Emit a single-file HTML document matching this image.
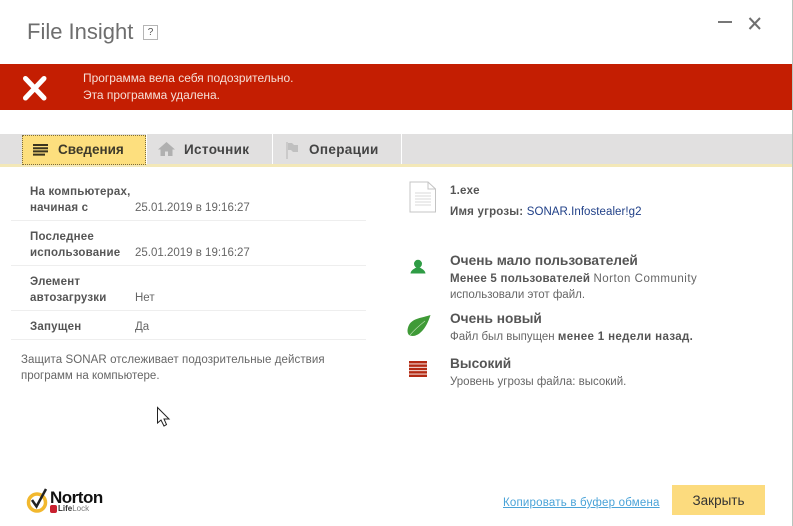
<!DOCTYPE html>
<html><head><meta charset="utf-8">
<style>
html,body{margin:0;padding:0;background:#fff}
#p{position:relative;width:793px;height:526px;overflow:hidden;background:#fff;font-family:"Liberation Sans",sans-serif;color:#666;font-size:11.5px}
#p div,#p a,#p svg{position:absolute}
.t{white-space:nowrap;line-height:16px}
.b{font-weight:bold;color:#555;letter-spacing:.2px}
.h{font-weight:bold;color:#555;font-size:13.7px}
.ln{left:11px;width:355px;height:1px;background:#eeeeee}
</style></head><body>
<div id="p">
<div style="left:792px;top:0;width:1px;height:526px;background:#b9c4bd"></div>
<div class="t" style="left:27px;top:18px;font-size:22px;line-height:28px;color:#6e6e6e">File Insight</div>
<div class="t" style="left:143px;top:25px;width:13px;height:13px;border:1px solid #b5b5b5;font-size:10px;line-height:13px;text-align:center;color:#555">?</div>
<svg style="left:716px;top:14px" width="50" height="20" viewBox="0 0 50 20"><path d="M2 8H16" stroke="#777" stroke-width="2"/><path d="M33.500 4L44 15M44 4L33.500 15" stroke="#707070" stroke-width="2" fill="none"/></svg>

<div style="left:0;top:64px;width:792px;height:46px;background:#c41e02"></div>
<svg style="left:22px;top:75px" width="26" height="26" viewBox="0 0 26 26"><path d="M3.500 3.500L22 23M22 3.500L3.500 23" stroke="#fff" stroke-width="5" stroke-linecap="round"/></svg>
<div class="t" style="left:83px;top:70px;color:#f6e0d8;font-size:11.95px">Программа вела себя подозрительно.</div>
<div class="t" style="left:83px;top:87px;color:#f6e0d8;font-size:11.95px">Эта программа удалена.</div>

<div style="left:0;top:134px;width:792px;height:30px;background:#e1e0e0"></div>
<div style="left:0;top:164px;width:792px;height:3px;background:#f3e8b8"></div>
<div style="left:22px;top:135px;width:122px;height:28px;background:#fddf7e;border:1px dotted #7d6d3c"></div>
<div style="left:146px;top:134px;width:1px;height:30px;background:#fff"></div>
<div style="left:272px;top:134px;width:1px;height:30px;background:#fff"></div>
<div style="left:401px;top:134px;width:1px;height:30px;background:#fff"></div>
<svg style="left:33px;top:144px" width="16" height="12" viewBox="0 0 16 12"><path d="M0 1H15M0 4.200H15M0 7.400H15M0 10.600H12" stroke="#3b3520" stroke-width="2"/></svg>
<div class="t" style="left:58px;top:142px;font-size:13.500px;font-weight:bold;color:#3e3a2a">Сведения</div>
<svg style="left:158px;top:142px" width="17" height="14" viewBox="0 0 17 14"><path d="M8.500 0L17 7.500H14.500V14H10V9.500H7V14H2.500V7.500H0Z" fill="#b0b0b0"/></svg>
<div class="t" style="left:184px;top:142px;font-size:13.500px;font-weight:bold;color:#444;letter-spacing:.35px">Источник</div>
<svg style="left:286px;top:142px" width="14" height="17" viewBox="0 0 14 17"><path d="M1 0V17" stroke="#b5b5b5" stroke-width="1"/><path d="M2 1H6L8 3H12V10H7L5 8H2Z" fill="#c0c0c0"/></svg>
<div class="t" style="left:309px;top:142px;font-size:13.500px;font-weight:bold;color:#444;letter-spacing:.35px">Операции</div>

<div class="t b" style="left:30px;top:184px">На компьютерах,</div>
<div class="t b" style="left:30px;top:200px">начиная с</div>
<div class="t" style="left:135px;top:200px">25.01.2019 в 19:16:27</div>
<div class="ln" style="top:220px"></div>
<div class="t b" style="left:30px;top:229px">Последнее</div>
<div class="t b" style="left:30px;top:245px">использование</div>
<div class="t" style="left:135px;top:245px">25.01.2019 в 19:16:27</div>
<div class="ln" style="top:265px"></div>
<div class="t b" style="left:30px;top:274px">Элемент</div>
<div class="t b" style="left:30px;top:290px">автозагрузки</div>
<div class="t" style="left:135px;top:290px">Нет</div>
<div class="ln" style="top:310px"></div>
<div class="t b" style="left:30px;top:319px">Запущен</div>
<div class="t" style="left:135px;top:319px">Да</div>
<div class="ln" style="top:339px"></div>
<div class="t" style="left:21px;top:352px;letter-spacing:.08px">Защита SONAR отслеживает подозрительные действия</div>
<div class="t" style="left:21px;top:368px">программ на компьютере.</div>

<svg style="left:409px;top:181px" width="28" height="32" viewBox="0 0 28 32"><path d="M1 1H19L26.500 8V31H1Z" fill="#fff" stroke="#c4c4c4"/><path d="M19 1V8H26.500" fill="none" stroke="#c4c4c4"/><path d="M6 12H22M6 15H22M6 18H22M6 21H22M6 24H22" stroke="#d8d8d8"/></svg>
<div class="t b" style="left:450px;top:183px">1.exe</div>
<div class="t b" style="left:450px;top:204px">Имя угрозы: <span style="font-weight:normal;color:#1f3f87;letter-spacing:.05px">SONAR.Infostealer!g2</span></div>

<svg style="left:410px;top:259px" width="16" height="15" viewBox="0 0 16 15"><circle cx="8" cy="4.800" r="4" fill="#2f9c45"/><path d="M0.500 14.500C1 11 4 10 6 8.500H10C12 10 15 11 15.500 14.500Z" fill="#2f9c45"/></svg>
<div class="t h" style="left:450px;top:253px">Очень мало пользователей</div>
<div class="t" style="left:450px;top:271px"><span class="b" style="letter-spacing:.25px">Менее 5 пользователей</span> <span style="letter-spacing:.5px">Norton Community</span></div>
<div class="t" style="left:450px;top:287px">использовали этот файл.</div>

<svg style="left:407px;top:315px" width="24" height="22" viewBox="0 0 24 22"><path d="M23.500 0C15 3 6 3 2 10C0 14 0 18 2 20C8 23.500 18 18 23.500 0Z" fill="#3f9a37"/><path d="M3 20C8 14 13 10 18 6" stroke="#bfe0b5" stroke-width=".6" fill="none"/></svg>
<div class="t h" style="left:450px;top:311px">Очень новый</div>
<div class="t" style="left:450px;top:329px">Файл был выпущен <span class="b" style="letter-spacing:.35px">менее 1 недели назад.</span></div>

<svg style="left:409px;top:361px" width="18" height="18" viewBox="0 0 18 18"><path d="M0 1.200H18M0 4.600H18M0 8H18M0 11.400H18M0 14.800H18" stroke="#b32a13" stroke-width="2.500"/></svg>
<div class="t h" style="left:450px;top:356px">Высокий</div>
<div class="t" style="left:450px;top:374px">Уровень угрозы файла: высокий.</div>

<svg style="left:155px;top:406px" width="16" height="22" viewBox="0 0 16 22"><path d="M2.500 1.500V17L6 14L9 20L11.500 18.500L9 13H14Z" fill="#fff" stroke="#222" stroke-width="1"/></svg>

<svg style="left:26px;top:488px" width="26" height="26" viewBox="0 0 26 26"><circle cx="11" cy="14.500" r="8.500" fill="none" stroke="#f2b82e" stroke-width="3.500"/><path d="M6 12L10.500 18.500L20 1" fill="none" stroke="#222" stroke-width="2.500"/></svg>
<div class="t" style="left:50px;top:488px;font-size:17px;line-height:20px;font-weight:bold;color:#111;letter-spacing:-.5px">Norton</div>
<div style="left:50px;top:505px;width:7px;height:8px;background:#c8202f;border-radius:2px"></div>
<div class="t" style="left:58px;top:503px;font-size:8px;line-height:12px;font-weight:bold;color:#333">Life<span style="font-weight:normal;color:#777">Lock</span></div>

<a class="t" style="left:503px;top:495px;color:#4aa3d8;text-decoration:underline;letter-spacing:.2px">Копировать в буфер обмена</a>
<div style="left:672px;top:485px;width:93px;height:30px;background:#fcdb7e;color:#333;font-size:13.500px;line-height:32px;text-align:center">Закрыть</div>
</div>
</body></html>
